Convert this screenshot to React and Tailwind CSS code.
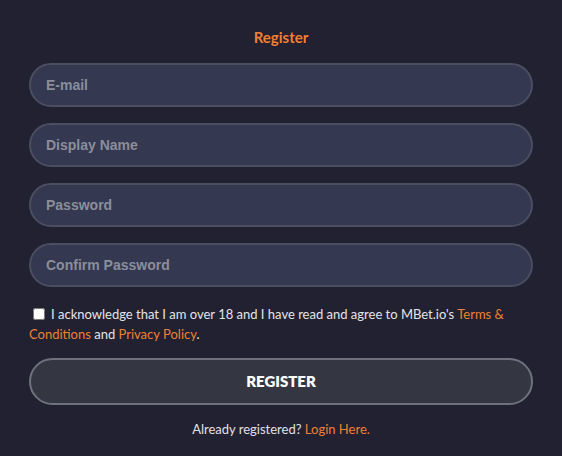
import React from 'react';

const fields = ['E-mail', 'Display Name', 'Password', 'Confirm Password'];

export default function App() {
  return (
    <div className="w-[562px] h-[456px] bg-[#222132] px-[29px] pt-[27px]" style={{ fontFamily: 'Lato, "Open Sans", sans-serif' }}>
      <h1 className="text-center text-[15px] font-bold text-[#ef8034] leading-5">Register</h1>

      <form className="mt-[16px] flex flex-col gap-[16px]">
        {fields.map((f) => (
          <input
            key={f}
            type={f.includes('Password') ? 'password' : 'text'}
            placeholder={f}
            className="h-[44px] w-full rounded-full border-2 border-[#4a4e61] bg-[#343850] px-[15px] text-[14px] font-bold text-white placeholder:text-[#8b8e9b] outline-none"
            style={{ fontFamily: '"Liberation Sans", Arial, sans-serif' }}
          />
        ))}
      </form>

      <div className="mt-[17px] text-[13px] leading-[20px] text-[#e4e4e8]">
        <div>
          <input type="checkbox" className="mr-[6px] ml-[4px] h-[12px] w-[12px] align-[-1px]" />
          I acknowledge that I am over 18 and I have read and agree to MBet.io's{' '}
          <a className="text-[#ef8034]">Terms &amp;</a>
        </div>
        <div>
          <a className="text-[#ef8034]">Conditions</a> and{' '}
          <a className="text-[#ef8034]">Privacy Policy</a>.
        </div>
      </div>

      <button className="mt-[14px] h-[47px] w-full rounded-full border-2 border-[#6f727c] bg-[#343741] text-[15px] font-extrabold text-white">
        REGISTER
      </button>

      <p className="mt-[15px] text-center text-[13px] text-[#e0e0e4]">
        Already registered? <a className="text-[#ef8034]">Login Here.</a>
      </p>
    </div>
  );
}
